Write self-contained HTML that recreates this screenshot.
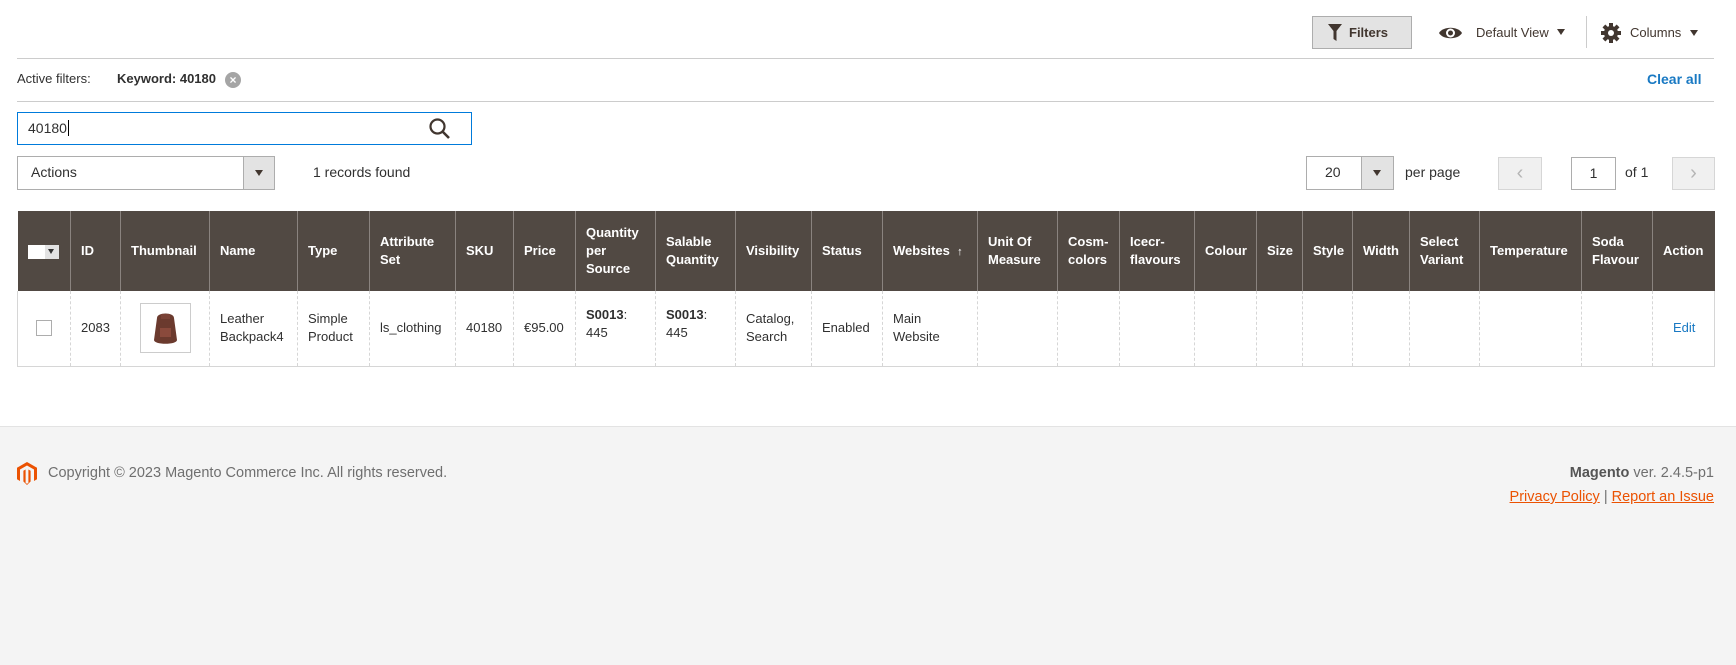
<!DOCTYPE html>
<html><head><meta charset="utf-8"><style>
*{box-sizing:border-box;margin:0;padding:0}
body{width:1736px;height:665px;background:#fff;font-family:"Liberation Sans",sans-serif;color:#303030;font-size:14px;position:relative;overflow:hidden}
.a{position:absolute}
.hr{position:absolute;left:17px;width:1697px;height:1px;background:#ccc}
table{position:absolute;left:17px;top:211px;width:1697px;border-collapse:collapse;table-layout:fixed}
th{background:#514943;color:#fff;font-size:13px;font-weight:bold;text-align:left;padding:0 10px;height:80px;border-left:1px solid #8a837f;line-height:18px;vertical-align:middle}
th:first-child{border-left:none}
td{height:75px;border-left:1px dashed #d6d6d6;padding:0 10px;font-size:13px;line-height:18px;vertical-align:middle;border-bottom:1px solid #d6d6d6}
td:first-child{border-left:1px solid #d6d6d6}
td:last-child{border-right:1px solid #d6d6d6}
.btn{position:absolute;border:1px solid #adadad;background:#e3e3e3}
footer{position:absolute;left:0;top:426px;width:1736px;height:239px;background:#f4f4f4;border-top:1px solid #e3e3e3}
</style></head><body>
<div class="btn" style="left:1312px;top:16px;width:100px;height:33px;"></div>
<svg class="a" style="left:1328px;top:24px" width="14" height="17" viewBox="0 0 14 17"><path d="M0 0h14L8.5 7v10l-3-2V7z" fill="#41362f"/></svg>
<div class="a" style="left:1349px;top:25px;font-size:13px;font-weight:bold;color:#41362f">Filters</div>
<svg class="a" style="left:1438px;top:25px" width="25" height="16" viewBox="0 0 25 16"><path d="M1 8C5 1 20 1 24 8 20 15 5 15 1 8z" fill="#41362f"/><circle cx="12.5" cy="8" r="4.5" fill="#fff"/><circle cx="12.5" cy="8" r="2.5" fill="#41362f"/></svg>
<div class="a" style="left:1476px;top:25px;font-size:13px;color:#41362f">Default View</div>
<div class="a" style="left:1557px;top:29px;border:4.5px solid transparent;border-top:6px solid #41362f;border-bottom:none"></div>
<div class="a" style="left:1586px;top:16px;width:1px;height:32px;background:#ccc"></div>
<svg class="a" style="left:1601px;top:23px" width="20" height="20" viewBox="0 0 20 20"><g fill="#41362f"><circle cx="10" cy="10" r="7"/><rect x="8" y="0" width="4" height="20"/><rect x="0" y="8" width="20" height="4"/><rect x="8" y="0" width="4" height="20" transform="rotate(45 10 10)"/><rect x="8" y="0" width="4" height="20" transform="rotate(-45 10 10)"/></g><circle cx="10" cy="10" r="3" fill="#fff"/></svg>
<div class="a" style="left:1630px;top:25px;font-size:13px;color:#41362f">Columns</div>
<div class="a" style="left:1690px;top:30px;border:4.5px solid transparent;border-top:6px solid #41362f;border-bottom:none"></div>
<div class="hr" style="top:58px"></div>
<div class="a" style="left:17px;top:71px;font-size:13px;">Active filters:</div>
<div class="a" style="left:117px;top:71px;font-size:13px;font-weight:bold">Keyword: 40180</div>
<div class="a" style="left:225px;top:72px;width:16px;height:16px;border-radius:50%;background:#a5a5a5;color:#fff;font-size:12px;line-height:16px;text-align:center;font-weight:bold">×</div>
<div class="a" style="left:1647px;top:71px;font-size:14px;font-weight:bold;color:#1979c3">Clear all</div>
<div class="hr" style="top:101px"></div>
<div class="a" style="left:17px;top:112px;width:455px;height:33px;border:1px solid #007bdb"></div>
<div class="a" style="left:28px;top:120px;font-size:14px">40180<span style="border-left:1px solid #000;margin-left:1px"></span></div>
<svg class="a" style="left:429px;top:118px" width="22" height="22" viewBox="0 0 22 22"><circle cx="8.5" cy="8.5" r="7" fill="none" stroke="#41362f" stroke-width="2.2"/><path d="M13.5 13.5L20 20" stroke="#41362f" stroke-width="2.6"/></svg>
<div class="a" style="left:17px;top:156px;width:258px;height:34px;border:1px solid #adadad"></div>
<div class="a" style="left:243px;top:157px;width:31px;height:32px;background:#e3e3e3;border-left:1px solid #adadad"></div>
<div class="a" style="left:255px;top:170px;border:4px solid transparent;border-top:6px solid #41362f;border-bottom:none"></div>
<div class="a" style="left:31px;top:164px;font-size:14px">Actions</div>
<div class="a" style="left:313px;top:164px;font-size:14px">1 records found</div>
<div class="a" style="left:1306px;top:156px;width:88px;height:34px;border:1px solid #adadad"></div>
<div class="a" style="left:1361px;top:157px;width:32px;height:32px;background:#e3e3e3;border-left:1px solid #adadad"></div>
<div class="a" style="left:1373px;top:170px;border:4px solid transparent;border-top:6px solid #41362f;border-bottom:none"></div>
<div class="a" style="left:1325px;top:164px;font-size:14px">20</div>
<div class="a" style="left:1405px;top:164px;font-size:14px">per page</div>
<div class="a" style="left:1498px;top:157px;width:44px;height:33px;background:#f0f0f0;border:1px solid #d6d6d6;color:#b5b5b5;text-align:center;font-size:20px;line-height:30px">&#8249;</div>
<div class="a" style="left:1571px;top:157px;width:45px;height:33px;border:1px solid #adadad;font-size:14px;text-align:center;line-height:31px">1</div>
<div class="a" style="left:1625px;top:164px;font-size:14px">of 1</div>
<div class="a" style="left:1672px;top:157px;width:43px;height:33px;background:#f0f0f0;border:1px solid #d6d6d6;color:#b5b5b5;text-align:center;font-size:20px;line-height:30px">&#8250;</div>
<table>
<colgroup><col style="width:53px"><col style="width:50px"><col style="width:89px"><col style="width:88px"><col style="width:72px"><col style="width:86px"><col style="width:58px"><col style="width:62px"><col style="width:80px"><col style="width:80px"><col style="width:76px"><col style="width:71px"><col style="width:95px"><col style="width:80px"><col style="width:62px"><col style="width:75px"><col style="width:62px"><col style="width:46px"><col style="width:50px"><col style="width:57px"><col style="width:70px"><col style="width:102px"><col style="width:71px"><col style="width:62px"></colgroup>
<tr><th style="padding:0 10px"><span style="display:inline-block;width:31px;height:14px;background:#fff;vertical-align:middle;position:relative"><span style="position:absolute;left:17px;top:0;width:14px;height:14px;background:#e3e3e3"></span><span style="position:absolute;left:20px;top:4px;border:3.5px solid transparent;border-top:5px solid #333;border-bottom:none"></span></span></th><th>ID</th><th>Thumbnail</th><th>Name</th><th>Type</th><th>Attribute Set</th><th>SKU</th><th>Price</th><th>Quantity per Source</th><th>Salable Quantity</th><th>Visibility</th><th>Status</th><th>Websites &nbsp;<span style="font-weight:normal;font-size:11px">↑</span></th><th>Unit Of Measure</th><th>Cosm-colors</th><th>Icecr-flavours</th><th>Colour</th><th>Size</th><th>Style</th><th>Width</th><th>Select Variant</th><th>Temperature</th><th>Soda Flavour</th><th>Action</th></tr>
<tr><td><span style="display:inline-block;width:16px;height:16px;border:1px solid #adadad;margin-left:8px;margin-top:4px"></span></td><td>2083</td><td><div style="width:51px;height:50px;border:1px solid #ccc;margin-left:9px;position:relative"><svg width="49" height="48" viewBox="0 0 49 48"><path d="M16 14c0-6 17-6 17 0l3 22c0 5-23 5-23 0z" fill="#6b3a2e"/><rect x="20" y="10" width="9" height="5" fill="#7a4236"/><rect x="19" y="24" width="11" height="9" fill="#8a4a3c"/></svg></div></td><td>Leather Backpack4</td><td>Simple Product</td><td>ls_clothing</td><td>40180</td><td>€95.00</td><td style="padding-bottom:8px"><b>S0013</b>:<br>445</td><td style="padding-bottom:8px"><b>S0013</b>:<br>445</td><td>Catalog, Search</td><td>Enabled</td><td>Main Website</td><td></td><td></td><td></td><td></td><td></td><td></td><td></td><td></td><td></td><td></td><td style="color:#1979c3;padding-left:20px">Edit</td></tr>
</table>
<footer>
<svg class="a" style="left:17px;top:35px" width="20" height="23" viewBox="0 0 20 23"><path d="M10 0L20 5.8v11.5l-3 1.7V7.5L10 3.5 3 7.5V19L0 17.3V5.8z" fill="#eb5202"/><path d="M8.6 7.5V21l1.4.8 1.4-.8V7.5l2.2 1.3V19.5L10 23l-3.6-3.5V8.8z" fill="#eb5202"/></svg>
<div class="a" style="left:48px;top:38px;font-size:14.5px;color:#6f6f6f">Copyright © 2023 Magento Commerce Inc. All rights reserved.</div>
<div class="a" style="right:22px;top:38px;font-size:14.5px;color:#6f6f6f"><b style="color:#555">Magento</b> ver. 2.4.5-p1</div>
<div class="a" style="right:22px;top:62px;font-size:14.5px;color:#6f6f6f"><span style="color:#eb5202;text-decoration:underline">Privacy Policy</span> | <span style="color:#eb5202;text-decoration:underline">Report an Issue</span></div>
</footer>
</body></html>
